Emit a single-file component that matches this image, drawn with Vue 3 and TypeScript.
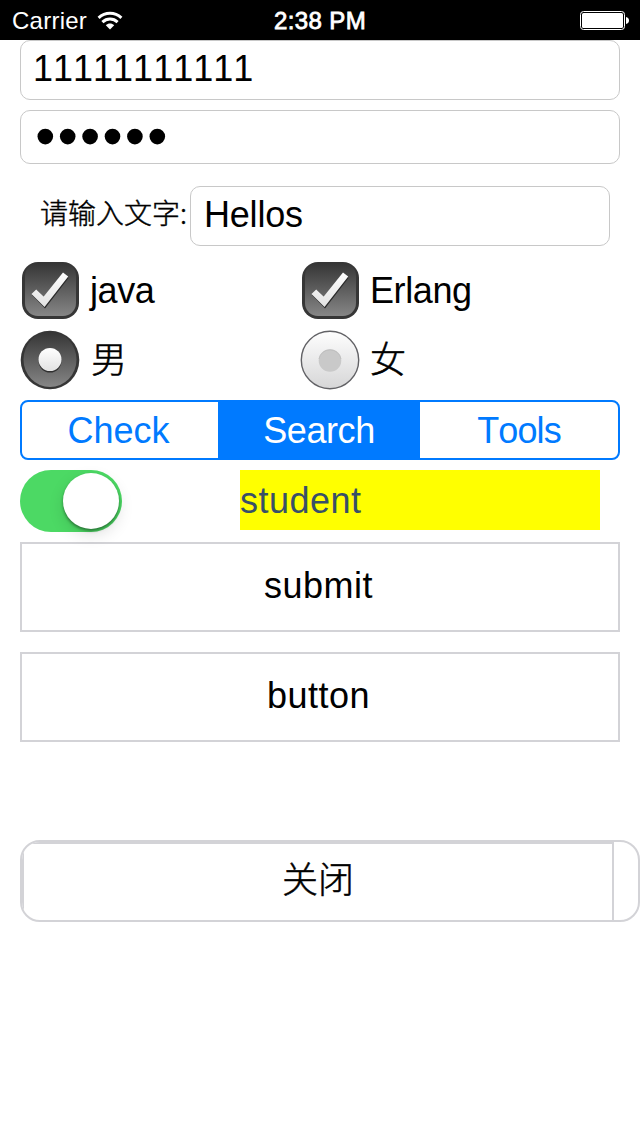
<script setup lang="ts">
import { ref } from 'vue'

interface Choice {
  label: string
  kind: string
}

const phone = ref('11111111111')
const passwordLength = 6
const message = ref('Hellos')
const languages: Choice[] = [
  { label: 'java', kind: 'java' },
  { label: 'Erlang', kind: 'erlang' },
]
const segments = ['Check', 'Search', 'Tools']
const active = ref(1)
const gender = ref(0)
const genders: Choice[] = [
  { label: '男', kind: 'male' },
  { label: '女', kind: 'female' },
]
</script>

<template>
  <div class="screen">
    <header class="status">
      <div class="carrier">
        <span>Carrier</span>
        <svg class="wifi" width="26" height="20" viewBox="0 0 26 20">
          <g fill="none" stroke="#fff" stroke-width="3">
            <path d="M1.6 6.800C8.200 .7 17.800 .7 24.400 6.800" />
            <path d="M5.400 11.100C9.800 7 16.200 7 20.600 11.100" />
          </g>
          <path d="M8.800 14.300C11.300 12 14.700 12 17.200 14.300L13 18.500Z" fill="#fff" />
        </svg>
      </div>
      <div class="time">2:38 PM</div>
      <div class="power">
        <svg width="50" height="20" viewBox="0 0 50 20">
          <rect x=".5" y=".5" width="44" height="18" rx="3" fill="none" stroke="#fff" />
          <rect x="2" y="2" width="41" height="15" rx="1.5" fill="#fff" />
          <path d="M46 6C50 6.500 50 12.500 46 13Z" fill="#fff" />
        </svg>
      </div>
    </header>

    <main class="form">
      <div class="field phone">{{ phone }}</div>
      <div class="field password">
        <svg width="140" height="20" viewBox="0 0 140 20">
          <circle v-for="n in passwordLength" :key="n" :cx="8.3 + (n - 1) * 22.4" cy="9.6" r="7.8" />
        </svg>
      </div>
      <div class="message-row">
        <label class="prompt">请输入文字:</label>
        <div class="field message">{{ message }}</div>
      </div>

      <div class="choices">
        <div v-for="item in languages" :key="item.label" class="choice">
          <svg width="60" height="60" viewBox="0 0 60 60">
            <defs>
              <linearGradient id="box-fill" x1="0" y1="0" x2="0" y2="1">
                <stop offset="0" stop-color="#353535" />
                <stop offset="1" stop-color="#868686" />
              </linearGradient>
              <linearGradient id="tick-fill" x1="0" y1="0" x2="0" y2="1">
                <stop offset="0" stop-color="#fff" />
                <stop offset="1" stop-color="#e2e2e2" />
              </linearGradient>
            </defs>
            <rect x="2" y="2" width="57" height="57" rx="16" fill="#363636" />
            <rect x="5" y="3" width="51" height="53" rx="13" fill="url(#box-fill)" />
            <path d="M12 35L16.500 30L24 36.500L43 13.500L48.500 18L25 48.500Z" fill="#292929" />
            <path d="M11.500 34L16.200 29.500L23.700 36.500L43 12.500L48.200 16.500L24.500 47Z" fill="url(#tick-fill)" />
          </svg>
          <span :class="['caption', item.kind]">{{ item.label }}</span>
        </div>
      </div>

      <div class="choices radios">
        <div v-for="(item, i) in genders" :key="item.label" class="choice" @click="gender = i">
          <svg v-if="gender === i" width="60" height="60" viewBox="0 0 60 60">
            <circle cx="30" cy="30" r="29.300" fill="#363636" />
            <ellipse cx="30" cy="29.500" rx="26.500" ry="27.500" fill="url(#box-fill)" />
            <circle cx="30" cy="31" r="11.500" fill="#303030" />
            <circle cx="30" cy="29.500" r="11.500" fill="url(#tick-fill)" />
          </svg>
          <svg v-else width="60" height="60" viewBox="0 0 60 60">
            <defs>
              <linearGradient id="off-fill" x1="0" y1="0" x2="0" y2="1">
                <stop offset="0" stop-color="#fefefe" />
                <stop offset="1" stop-color="#d6d6d7" />
              </linearGradient>
            </defs>
            <circle cx="30" cy="30" r="28.700" fill="url(#off-fill)" stroke="#626266" stroke-width="1.400" />
            <circle cx="30" cy="30.500" r="11.300" fill="#c9c9c9" />
            <path d="M18.900 29A11.300 11.300 0 0 1 41.100 29" fill="none" stroke="#b9b9b9" stroke-width=".7" />
          </svg>
          <span :class="['caption', 'cjk', item.kind]">{{ item.label }}</span>
        </div>
      </div>

      <div class="segmented">
        <div
          v-for="(name, i) in segments"
          :key="name"
          :class="['segment', name.toLowerCase(), { active: i === active }]"
          @click="active = i"
        >
          {{ name }}
        </div>
      </div>

      <div class="switch-row">
        <div class="switch"><div class="thumb"></div></div>
        <div class="student">student</div>
      </div>

      <div class="button submit">submit</div>
      <div class="button plain">button</div>
      <div class="close-frame">
        <div class="close">关闭</div>
      </div>
    </main>
  </div>
</template>

<style>
body {
  margin: 0;
  background: #fff;
}
</style>

<style scoped>
.screen {
  width: 640px;
  height: 1136px;
  overflow: hidden;
  background: #fff;
  color: #000;
  font-family: 'Liberation Sans', 'Noto Sans CJK SC', sans-serif;
  font-size: 36px;
  font-kerning: none;
}
.status {
  box-sizing: border-box;
  height: 40px;
  padding: 0 10px 0 12px;
  display: grid;
  grid-template-columns: 1fr auto 1fr;
  align-items: center;
  background: #000;
  color: #fff;
  font-size: 24px;
  line-height: 40px;
}
.carrier {
  display: flex;
  align-items: center;
  gap: 10px;
  height: 40px;
  padding-top: 1px;
  letter-spacing: 0.25px;
}
.wifi {
  margin-bottom: 1px;
}
.time {
  margin-left: -2px;
  padding-top: 1px;
  -webkit-text-stroke: 0.8px #fff;
  letter-spacing: 0.4px;
}
.power {
  display: flex;
  justify-content: flex-end;
}
.form {
  padding-left: 20px;
}
.field {
  box-sizing: border-box;
  width: 600px;
  height: 60px;
  border: 1px solid #c8c8c8;
  border-radius: 10px;
  line-height: 56px;
}
.phone {
  padding-left: 12px;
}
.password {
  display: flex;
  align-items: center;
  height: 54px;
  margin-top: 10px;
  padding-left: 16px;
}
.message-row {
  display: flex;
  margin-top: 22px;
}
.prompt {
  box-sizing: border-box;
  width: 170px;
  padding-left: 20px;
  white-space: nowrap;
  font-family: 'Noto Sans CJK SC', sans-serif;
  font-weight: 300;
  font-size: 28px;
  line-height: 52px;
  -webkit-text-stroke: 0.4px #000;
}
.message {
  width: 420px;
  padding-left: 13px;
  letter-spacing: -0.2px;
}
.choices {
  display: grid;
  grid-template-columns: 280px 280px;
  margin-top: 14px;
}
.radios {
  margin-top: 10px;
}
.choice {
  display: flex;
  align-items: center;
  gap: 10px;
  height: 60px;
}
.caption {
  height: 60px;
  line-height: 61px;
}
.java {
  letter-spacing: -0.4px;
}
.erlang {
  letter-spacing: -0.4px;
}
.cjk,
.close {
  font-family: 'Noto Sans CJK SC', sans-serif;
  font-weight: 300;
  -webkit-text-stroke: 0.5px #000;
}
.caption.cjk {
  line-height: 55px;
}
.male {
  padding-left: 1px;
}
.segmented {
  box-sizing: border-box;
  display: grid;
  grid-template-columns: 196px 202px 198px;
  width: 600px;
  height: 60px;
  margin-top: 10px;
  border: 2px solid #007aff;
  border-radius: 8px;
  overflow: hidden;
  color: #007aff;
  text-align: center;
  line-height: 57px;
}
.segment.check {
  padding-right: 3px;
}
.segment.search {
  letter-spacing: -0.4px;
}
.segment.tools {
  letter-spacing: -0.9px;
}
.segment.active {
  background: #007aff;
  color: #fff;
}
.switch-row {
  display: flex;
  margin-top: 10px;
}
.switch {
  box-sizing: border-box;
  width: 102px;
  height: 62px;
  padding: 3px;
  display: flex;
  justify-content: flex-end;
  border-radius: 31px;
  background: #4cd964;
}
.thumb {
  width: 56px;
  height: 56px;
  border-radius: 50%;
  background: #fff;
  box-shadow: 0 6px 16px rgba(0, 0, 0, 0.12), 0 2px 3px rgba(0, 0, 0, 0.4);
}
.student {
  width: 360px;
  height: 60px;
  margin-left: 118px;
  background: #ff0;
  color: #385068;
  line-height: 61px;
  letter-spacing: 0.5px;
}
.button {
  box-sizing: border-box;
  width: 600px;
  height: 90px;
  margin-top: 10px;
  padding-right: 3px;
  border: 2px solid #d3d3d7;
  text-align: center;
  line-height: 84px;
  letter-spacing: 0.5px;
}
.button.plain {
  margin-top: 20px;
}
.close-frame {
  box-sizing: border-box;
  width: 620px;
  height: 82px;
  margin-top: 98px;
  border: 2px solid #d3d3d7;
  border-radius: 20px;
  overflow: hidden;
}
.close {
  box-sizing: border-box;
  width: 592px;
  height: 90px;
  border: 2px solid #d3d3d7;
  text-align: center;
  line-height: 66px;
}
</style>
